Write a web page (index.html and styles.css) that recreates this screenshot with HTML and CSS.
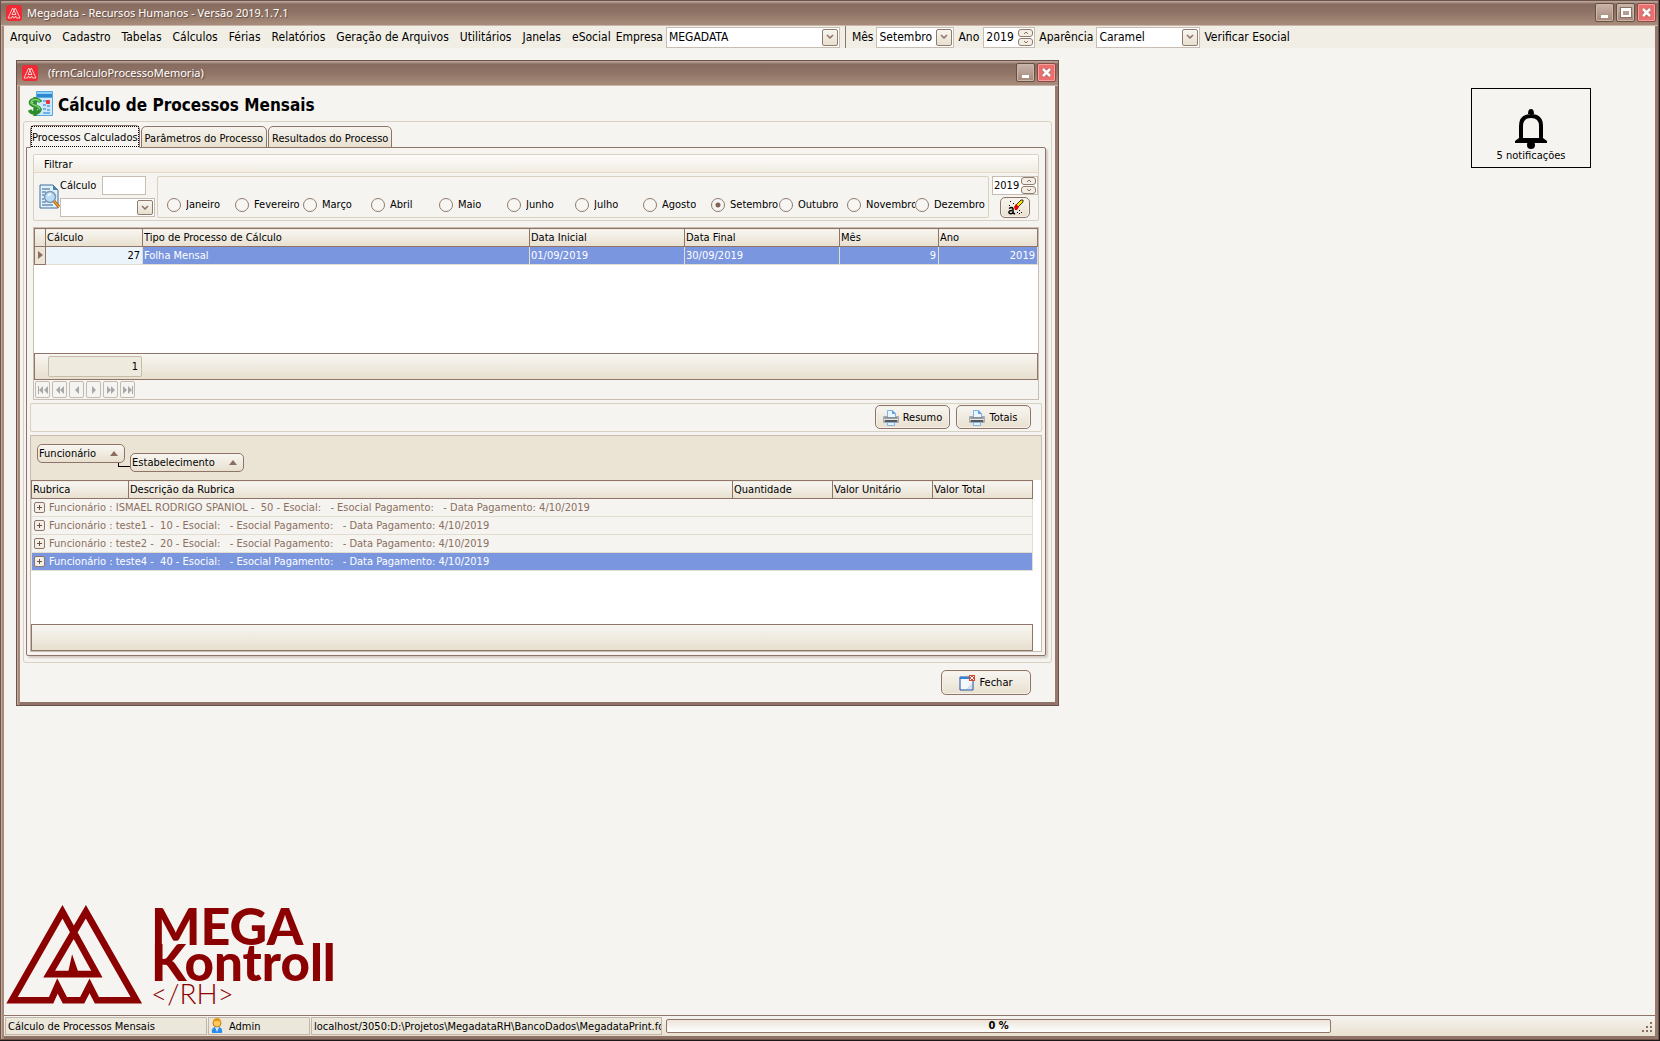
FILE: index.html
```
<!DOCTYPE html>
<html lang="pt-BR">
<head>
    <meta charset="UTF-8">
    <meta name="viewport" content="width=device-width, initial-scale=1.0">
    <title>Megadata - Recursos Humanos</title>
    <link rel="stylesheet" href="styles.css">
</head>
<body>
    <!-- simbolos usados mais de uma vez -->
    <svg class="defs" aria-hidden="true">
        <symbol id="app" viewBox="0 0 16 16">
            <rect width="16" height="16" rx="3" fill="#ee2b35"/>
            <path d="M9.300 3 14 13h-3.500L9.500 11l-1 2h-1l-1-2-1 2H2L6.700 3l3.300 6.500H6z" fill="none" stroke="#ffd9d6" stroke-width=".9"/>
        </symbol>
        <symbol id="down" viewBox="0 0 8 6"><path d="M1 1l3 3 3-3" fill="none" stroke="#8a7060" stroke-width="1.500"/></symbol>
        <symbol id="tri-up" viewBox="0 0 8 5"><path d="M0 5l4-5 4 5z" fill="#8a6e60"/></symbol>
        <symbol id="close" viewBox="0 0 11 11"><path d="M2 2l7 7M9 2l-7 7" stroke="#a5685f" stroke-width="4"/><path d="M2 2l7 7M9 2l-7 7" stroke="#fff" stroke-width="2.500"/></symbol>
        <symbol id="printer" viewBox="0 0 16 17">
            <path d="M0 8q0-1 1-1h14q1 0 1 1v5q0 1-1 1H1q-1 0-1-1z" fill="#a9abad"/>
            <path d="M4.500 1.500h5l3 3v4h-8z" fill="#eaf5ff" stroke="#7cb4e6"/>
            <path d="M9 1v4h4z" fill="#5da4e4"/>
            <path d="M2 8h12v1.500H2z" fill="#8b8e91"/>
            <path d="M1 10h14v1H1z" fill="#e3e4e5"/>
            <path d="M2 11h12v2H2z" fill="#55585b"/>
            <path d="M4.500 13.500h7v3h-7z" fill="#e6f3ff" stroke="#7cb4e6"/>
        </symbol>
    </svg>

    <div class="window main-window">
        <div class="titlebar">
            <svg class="app-icon"><use href="#app"/></svg>
            <span class="title-text">Megadata - Recursos Humanos - Versão 2019.1.7.1</span>
            <button class="win-btn" aria-label="Minimizar"><i class="min"></i></button>
            <button class="win-btn" aria-label="Maximizar"><i class="max"></i></button>
            <button class="win-btn red" aria-label="Fechar"><svg width="11" height="11"><use href="#close"/></svg></button>
        </div>

        <div class="menubar">
            <nav class="menu">
                <a href="#">Arquivo</a>
                <a href="#">Cadastro</a>
                <a href="#">Tabelas</a>
                <a href="#">Cálculos</a>
                <a href="#">Férias</a>
                <a href="#">Relatórios</a>
                <a href="#">Geração de Arquivos</a>
                <a href="#">Utilitários</a>
                <a href="#">Janelas</a>
                <a href="#">eSocial</a>
            </nav>
            <label for="empresa">Empresa</label>
            <span class="combo w-empresa">
                <select id="empresa"><option>MEGADATA</option></select>
                <span class="drop"><svg width="8" height="6"><use href="#down"/></svg></span>
            </span>
            <span class="sep"></span>
            <label for="mes">Mês</label>
            <span class="combo w-mes">
                <select id="mes"><option>Setembro</option></select>
                <span class="drop"><svg width="8" height="6"><use href="#down"/></svg></span>
            </span>
            <label for="ano">Ano</label>
            <span class="spin">
                <input type="text" id="ano" value="2019">
                <span class="spin-btns">
                    <button aria-label="Mais"><svg viewBox="0 0 6 4"><path d="M1 3l2-2 2 2"/></svg></button>
                    <button aria-label="Menos"><svg viewBox="0 0 6 4"><path d="M1 1l2 2 2-2"/></svg></button>
                </span>
            </span>
            <label for="aparencia">Aparência</label>
            <span class="combo w-aparencia">
                <select id="aparencia"><option>Caramel</option></select>
                <span class="drop"><svg width="8" height="6"><use href="#down"/></svg></span>
            </span>
            <a href="#" class="verificar">Verificar Esocial</a>
        </div>

        <div class="workspace">
            <!-- aviso de notificacoes -->
            <button class="notify">
                <svg width="32" height="40" viewBox="0 0 32 40">
                    <path d="M16 0q3 0 3 5h-6q0-5 3-5z"/>
                    <path d="M6 31V17Q6 7 16 7t10 10v14" fill="none" stroke="#000" stroke-width="4"/>
                    <path d="M4 29h24l4 3v2H0v-2z"/>
                    <circle cx="16" cy="36" r="4"/>
                </svg>
                5 notificações
            </button>

            <div class="logo">
                <svg width="137" height="102" viewBox="18 70 410 305">
                    <path d="M187 96 36 361H153L172 318 194 361H246L268 318 290 361H408L257 96 147 283H213L218 260 226 283H290Z" fill="none" stroke="#8b0000" stroke-width="20" stroke-miterlimit="10"/>
                </svg>
                <div class="logo-text">
                    <div class="mega">MEGA</div>
                    <div class="kontroll">Kontroll</div>
                    <div class="rh">&lt;/RH&gt;</div>
                </div>
            </div>

            <!-- janela de calculo -->
            <div class="window child-window">
                <div class="titlebar">
                    <svg class="app-icon"><use href="#app"/></svg>
                    <span class="title-text">(frmCalculoProcessoMemoria)</span>
                    <button class="win-btn" aria-label="Minimizar"><i class="min"></i></button>
                    <button class="win-btn red" aria-label="Fechar"><svg width="11" height="11"><use href="#close"/></svg></button>
                </div>
                <div class="form">
                    <header class="form-header">
                        <svg width="25" height="25" viewBox="0 0 25 25">
                            <rect x="8" y="0" width="17" height="25" rx="1" fill="#55a9e3"/>
                            <rect x="9" y="1" width="15" height="5" fill="#2f86cf"/>
                            <rect x="9" y="1" width="15" height="2" fill="#8fd0f5"/>
                            <rect x="9" y="7" width="15" height="17" fill="#cfe7f9"/>
                            <g fill="#6fb2e4"><rect x="11" y="9" width="3" height="2"/><rect x="15" y="9" width="3" height="2"/><rect x="15" y="13" width="3" height="2"/><rect x="19" y="14" width="3" height="2"/><rect x="15" y="17" width="3" height="2"/><rect x="19" y="18" width="3" height="2"/><rect x="15" y="21" width="7" height="2"/></g>
                            <rect x="18" y="9" width="4" height="4" rx="1" fill="#e8343a"/>
                            <path d="M12.500 11Q11 8.500 7 8.500 2 9 2.500 12 3 14 7 15t5 3.500q-1 3.500-5 3.500T1.500 19M7 6v19" fill="none" stroke="#2c8d2c" stroke-width="3.500"/>
                            <path d="M12 10.500Q10 8.500 7 8.500 3 9 3 12 4 13.500 7.500 14.500T12 18.500" fill="none" stroke="#7fd468" stroke-width="1.500"/>
                        </svg>
                        <h1>Cálculo de Processos Mensais</h1>
                    </header>

                    <div class="group">
                        <div class="tabs">
                            <button class="tab active"><span>Processos Calculados</span></button>
                            <button class="tab"><span>Parâmetros do Processo</span></button>
                            <button class="tab"><span>Resultados do Processo</span></button>
                        </div>
                        <div class="page">
                            <fieldset class="filter">
                                <div class="filter-title">Filtrar</div>
                                <div class="filter-body">
                                    <svg class="search-icon" width="21" height="25" viewBox="0 0 21 25">
                                        <path d="M1 1h13l5 5v18H1z" fill="#e3f1fb" stroke="#3c6f9e"/>
                                        <path d="M14 1v5h5z" fill="#4c81ad"/>
                                        <path d="M3 5h8M3 8h4M3 11h2M3 15h2M3 18h4M3 21h11" stroke="#2d5f92" stroke-width="1"/>
                                        <circle cx="11" cy="13" r="5.500" fill="#b9dcf7" stroke="#7d98b4" stroke-width="1.500"/>
                                        <path d="M9 12q1-2 3-2" stroke="#fff" stroke-width="1.500" fill="none"/>
                                        <path d="M15 17l5 6" stroke="#b86a12" stroke-width="3"/>
                                        <path d="M15 17l5 6" stroke="#ffc04a" stroke-width="1"/>
                                    </svg>
                                    <div class="calc">
                                        <div class="calc-row">
                                            <label for="calculo">Cálculo</label>
                                            <input type="text" id="calculo">
                                        </div>
                                        <span class="combo">
                                            <select aria-label="Tipo de cálculo"><option></option></select>
                                            <span class="drop"><svg width="8" height="6"><use href="#down"/></svg></span>
                                        </span>
                                    </div>
                                    <div class="months">
                                        <label><input type="radio" name="m"><span>Janeiro</span></label>
                                        <label><input type="radio" name="m"><span>Fevereiro</span></label>
                                        <label><input type="radio" name="m"><span>Março</span></label>
                                        <label><input type="radio" name="m"><span>Abril</span></label>
                                        <label><input type="radio" name="m"><span>Maio</span></label>
                                        <label><input type="radio" name="m"><span>Junho</span></label>
                                        <label><input type="radio" name="m"><span>Julho</span></label>
                                        <label><input type="radio" name="m"><span>Agosto</span></label>
                                        <label><input type="radio" name="m" checked><span>Setembro</span></label>
                                        <label><input type="radio" name="m"><span>Outubro</span></label>
                                        <label><input type="radio" name="m"><span>Novembro</span></label>
                                        <label><input type="radio" name="m"><span>Dezembro</span></label>
                                    </div>
                                    <div class="year">
                                        <span class="spin">
                                            <input type="text" value="2019" aria-label="Ano do filtro">
                                            <span class="spin-btns">
                                                <button aria-label="Mais"><svg viewBox="0 0 6 4"><path d="M1 3l2-2 2 2"/></svg></button>
                                                <button aria-label="Menos"><svg viewBox="0 0 6 4"><path d="M1 1l2 2 2-2"/></svg></button>
                                            </span>
                                        </span>
                                        <button class="btn erase" aria-label="Limpar filtro">
                                            <svg width="17" height="16" viewBox="0 0 17 16">
                                                <path d="M9 6l5-5h2v2l-5 5z" fill="#ffe600" stroke="#000" stroke-width=".8"/>
                                                <path d="M7 8l2-3 3 3-2 3H8z" fill="#e00000"/>
                                                <path d="M2 9.500q3-2 4 0V14M5 11.500q-3.500 0-3 2T6 14l2 1" fill="none" stroke="#000" stroke-width="1.500"/>
                                                <path d="M3 2h1v1H3zM6 4h1v1H6zM2 6h1v1H2zM10 13h1v1h-1zM12 11h1v1h-1zM12 14h1v1h-1zM14 13h1v1h-1z"/>
                                            </svg>
                                        </button>
                                    </div>
                                </div>
                            </fieldset>

                            <div class="grid-box">
                                <div class="grid-area area-top">
                                    <table class="grid">
                                        <colgroup><col class="c-ind"><col class="c-calc"><col><col class="c-date"><col class="c-date"><col class="c-num"><col class="c-num"></colgroup>
                                        <thead>
                                            <tr><th></th><th>Cálculo</th><th>Tipo de Processo de Cálculo</th><th>Data Inicial</th><th>Data Final</th><th>Mês</th><th>Ano</th></tr>
                                        </thead>
                                        <tbody>
                                            <tr class="selected">
                                                <td class="ind"><svg width="5" height="8"><path d="M0 0l5 4-5 4z" fill="#8a6e60"/></svg></td>
                                                <td class="num focus">27</td><td>Folha Mensal</td><td>01/09/2019</td><td>30/09/2019</td><td class="num">9</td><td class="num">2019</td>
                                            </tr>
                                        </tbody>
                                    </table>
                                </div>
                                <div class="grid-footer"><span class="count">1</span></div>
                                <div class="navigator">
                                    <button aria-label="Primeiro"><svg width="10" height="8"><path d="M0 0h1v8H0zM5 0v8L1 4zM10 0v8L6 4z"/></svg></button>
                                    <button aria-label="Página anterior"><svg width="8" height="8"><path d="M4 0v8L0 4zM8 0v8L4 4z"/></svg></button>
                                    <button aria-label="Anterior"><svg width="4" height="8"><path d="M4 0v8L0 4z"/></svg></button>
                                    <button aria-label="Próximo"><svg width="4" height="8"><path d="M0 0v8l4-4z"/></svg></button>
                                    <button aria-label="Próxima página"><svg width="8" height="8"><path d="M0 0v8l4-4zM4 0v8l4-4z"/></svg></button>
                                    <button aria-label="Último"><svg width="10" height="8"><path d="M0 0v8l4-4zM5 0v8l4-4zM9 0h1v8H9z"/></svg></button>
                                </div>
                            </div>

                            <div class="actions">
                                <button class="btn"><svg width="16" height="17"><use href="#printer"/></svg>Resumo</button>
                                <button class="btn"><svg width="16" height="17"><use href="#printer"/></svg>Totais</button>
                            </div>

                            <div class="detail-box">
                                <div class="group-by">
                                    <button class="chip">Funcionário<svg width="8" height="5"><use href="#tri-up"/></svg></button>
                                    <span class="link"></span>
                                    <button class="chip second">Estabelecimento<svg width="8" height="5"><use href="#tri-up"/></svg></button>
                                </div>
                                <div class="grid-area area-detail">
                                    <table class="grid detail">
                                        <colgroup><col class="c-calc"><col><col class="c-num"><col class="c-num"><col class="c-num"></colgroup>
                                        <thead>
                                            <tr><th>Rubrica</th><th>Descrição da Rubrica</th><th>Quantidade</th><th>Valor Unitário</th><th>Valor Total</th></tr>
                                        </thead>
                                        <tbody>
                                            <tr><td colspan="5"><button class="plus" aria-label="Expandir"></button>Funcionário : ISMAEL RODRIGO SPANIOL -  50 - Esocial:   - Esocial Pagamento:   - Data Pagamento: 4/10/2019</td></tr>
                                            <tr><td colspan="5"><button class="plus" aria-label="Expandir"></button>Funcionário : teste1 -  10 - Esocial:   - Esocial Pagamento:   - Data Pagamento: 4/10/2019</td></tr>
                                            <tr><td colspan="5"><button class="plus" aria-label="Expandir"></button>Funcionário : teste2 -  20 - Esocial:   - Esocial Pagamento:   - Data Pagamento: 4/10/2019</td></tr>
                                            <tr class="selected"><td colspan="5"><button class="plus" aria-label="Expandir"></button>Funcionário : teste4 -  40 - Esocial:   - Esocial Pagamento:   - Data Pagamento: 4/10/2019</td></tr>
                                        </tbody>
                                    </table>
                                </div>
                                <div class="grid-footer"></div>
                            </div>
                        </div>
                    </div>

                    <footer class="form-footer">
                        <button class="btn close-btn">
                            <svg width="16" height="16" viewBox="0 0 16 16">
                                <path d="M1 2h13v13H1z" fill="#f4f8fd" stroke="#1b4e9b"/>
                                <path d="M1 2h13v2H1z" fill="#2f86d8"/>
                                <path d="M13 8v6H7z" fill="#d5e0ee"/>
                                <rect x="10" y="0" width="6" height="6" fill="#d8442c"/>
                                <path d="M11 1l4 4M15 1l-4 4" stroke="#fff"/>
                            </svg>Fechar
                        </button>
                    </footer>
                </div>
            </div>
        </div>

        <div class="statusbar">
            <div class="panel p-form">Cálculo de Processos Mensais</div>
            <div class="panel p-user">
                <svg width="12" height="16" viewBox="0 0 12 16">
                    <path d="M1 15q-1-5 3-6h4q4 1 3 6z" fill="#2b8df0"/>
                    <path d="M4 9h4l-2 5z" fill="#d9efff"/>
                    <circle cx="6" cy="5" r="4" fill="#ffc95c" stroke="#c47a10"/>
                    <path d="M2 4q0-4 4-4t4 4q-4-2-8 0z" fill="#e59a1c"/>
                </svg>Admin
            </div>
            <div class="panel p-db">localhost/3050:D:\Projetos\MegadataRH\BancoDados\MegadataPrint.fdb</div>
            <div class="progress" role="progressbar" aria-valuenow="0">0 %</div>
            <svg class="grip" width="11" height="11"><path d="M9 0h2v2H9zM9 4h2v2H9zM9 8h2v2H9zM5 4h2v2H5zM5 8h2v2H5zM1 8h2v2H1z"/></svg>
        </div>
    </div>
</body>
</html>
```
FILE: styles.css
```
* {
    box-sizing: border-box;
}
body {
    margin: 0;
    background: #1b1719;
    font-family: Tahoma, "DejaVu Sans Condensed", sans-serif;
    font-size: 11px;
    color: #000;
}
button, input, select {
    font: inherit;
    color: inherit;
    margin: 0;
    padding: 0;
}
a {
    color: inherit;
    text-decoration: none;
}
svg {
    flex: none;
}
.defs {
    display: none;
}

/* molduras das janelas */
.window {
    display: flex;
    flex-direction: column;
    background: #f6f4f0;
    border: 1px solid #6b5349;
    box-shadow: inset 1px 0 #c4aca1, inset 3px 0 #a58979, inset -3px 0 #96796b, inset 0 -3px #8f7366;
    padding: 0 3px 3px;
}
.main-window {
    height: calc(100vh - 1px);
    margin-right: 1px;
}
.titlebar {
    display: flex;
    align-items: center;
    gap: 2px;
    height: 25px;
    flex: none;
    margin: 0 -3px;
    padding: 0 2px 2px 5px;
    background: linear-gradient(#b8a095 0, #b8a095 1px, #866b5f 3px, #8c7164 10px, #a88c7b 24px, #c9b5aa 24px);
}
.app-icon {
    width: 16px;
    height: 16px;
}
.title-text {
    flex: 1;
    margin-left: 3px;
    font-family: "Segoe UI", "Noto Sans", sans-serif;
    font-size: 11px;
    color: #fff;
    text-shadow: 1px 1px 1px #5d453b;
}
.win-btn {
    display: flex;
    align-items: center;
    justify-content: center;
    width: 19px;
    height: 19px;
    border: 1px solid #66503f;
    border-radius: 2px;
    background: linear-gradient(#c9b3a9, #a5897b);
    box-shadow: inset 0 0 0 1px #cbb6ac;
}
.win-btn.red {
    background: #ec6f70;
    box-shadow: inset 0 0 0 1px #f5a09d;
    border-color: #8b4a44;
}
.min {
    width: 7px;
    height: 3px;
    margin-top: 8px;
    background: #fff;
}
.max {
    width: 10px;
    height: 9px;
    border: 2px solid #fff;
    border-top-width: 3px;
    outline: 1px solid #8a7062;
}

/* menu */
.menubar {
    display: flex;
    align-items: center;
    height: 22px;
    flex: none;
    padding-left: 6px;
    background: #f1eee5;
    font-size: 12px;
    white-space: nowrap;
}
.menu {
    display: flex;
    gap: 11px;
    margin-right: 5px;
}
.sep {
    width: 1px;
    height: 22px;
    margin: 0 6px 0 1px;
    background: #8f7567;
}
.combo {
    position: relative;
    display: flex;
    height: 21px;
    margin: 0 4px 0 3px;
}
.combo select {
    width: 100%;
    padding: 0 18px 0 2px;
    appearance: none;
    border: 1px solid #c8bdb3;
    border-radius: 0;
    background: #fff;
}
.w-empresa {
    width: 174px;
}
.w-mes {
    width: 78px;
}
.w-aparencia {
    width: 104px;
}
.drop {
    position: absolute;
    top: 2px;
    right: 2px;
    bottom: 2px;
    width: 16px;
    display: flex;
    align-items: center;
    justify-content: center;
    border: 1px solid #8f7c6d;
    border-radius: 2px;
    background: linear-gradient(#f7f5f0, #e8e0cf);
    pointer-events: none;
}
.spin {
    display: flex;
    align-items: center;
    width: 52px;
    height: 21px;
    margin: 0 4px;
    padding: 0 1px 0 2px;
    border: 1px solid #c8bdb3;
    background: #fff;
}
.spin input {
    flex: 1;
    min-width: 0;
    border: 0;
    background: none;
}
.spin-btns {
    display: flex;
    flex-direction: column;
    gap: 1px;
}
.spin-btns button {
    display: flex;
    align-items: center;
    justify-content: center;
    width: 15px;
    height: 8px;
    border: 1px solid #8f7c6d;
    border-radius: 3px;
    background: #f3efe6;
}
.spin-btns svg {
    width: 6px;
    height: 4px;
    fill: none;
    stroke: #8a6e60;
}

/* area de trabalho */
.workspace {
    position: relative;
    flex: 1;
    min-height: 0;
}
.notify {
    position: absolute;
    top: 40px;
    right: 64px;
    width: 120px;
    height: 80px;
    display: flex;
    flex-direction: column;
    align-items: center;
    justify-content: flex-end;
    padding-bottom: 5px;
    border: 1px solid #000;
    background: none;
}
.logo {
    position: absolute;
    left: 2px;
    bottom: 10px;
    display: flex;
    align-items: flex-end;
    gap: 8px;
    color: #8b0000;
    font-family: Lato, sans-serif;
}
.logo-text {
    display: flex;
    flex-direction: column;
}
.mega {
    font-size: 52px;
    font-weight: 900;
    line-height: 36px;
}
.kontroll {
    font-size: 51px;
    font-weight: 900;
    line-height: 38px;
}
.rh {
    font-size: 28px;
    font-weight: 300;
    line-height: 24px;
}

/* janela filha */
.child-window {
    position: absolute;
    top: 12px;
    left: 12px;
    right: 596px;
}
.child-window .title-text {
    margin-left: 8px;
}
.form-header {
    display: flex;
    align-items: center;
    gap: 5px;
    height: 35px;
    padding-left: 8px;
}
h1 {
    margin: 0;
    padding-top: 3px;
    font-size: 17px;
    font-weight: bold;
}
.group {
    margin: 0 3px;
    padding: 3px 5px 6px 2px;
    border: 1px solid #d8d0c0;
    border-radius: 3px;
}
.tabs {
    position: relative;
    display: flex;
    align-items: flex-end;
    gap: 1px;
    margin: 0 0 -1px 4px;
}
.tab {
    height: 22px;
    padding: 2px 3px 0;
    border: 1px solid #8f7567;
    border-radius: 5px 5px 0 0;
    background: linear-gradient(#f6f4ef, #e9e1cf);
}
.tab.active {
    height: 23px;
    padding: 0 1px;
    border-bottom-color: #f6f4f0;
    background: #f6f4f0;
}
.tab.active span {
    display: block;
    padding: 4px 0 2px;
    outline: 1px dotted #000;
}
.page {
    display: flex;
    flex-direction: column;
    gap: 3px;
    padding: 6px 3px 3px;
    border: 1px solid #8f7567;
    border-radius: 0 2px 2px 2px;
    box-shadow: 2px 2px 2px #d3c9bf;
}
.filter {
    min-width: 0;
    margin: 0 3px;
    padding: 0;
    border: 1px solid #d8d0c0;
    border-radius: 2px;
}
.filter-title {
    height: 18px;
    padding: 3px 10px 0;
    border-bottom: 1px solid #e3dac6;
    background: linear-gradient(#fdfcfa, #f0ece3);
}
.filter-body {
    display: flex;
    align-items: center;
    padding: 2px 0;
    height: 47px;
}
.search-icon {
    margin-left: 5px;
}
.calc {
    display: flex;
    flex-direction: column;
    gap: 3px;
    width: 95px;
}
.calc-row {
    display: flex;
    justify-content: space-between;
    align-items: center;
    padding-right: 9px;
}
.calc-row input {
    width: 44px;
    height: 19px;
    border: 1px solid #c8bdb3;
    background: #fff;
}
.calc .combo {
    height: 19px;
    margin: 0;
}
.months {
    display: grid;
    grid-template-columns: repeat(12, minmax(0, 1fr));
    align-items: end;
    flex: 1;
    min-width: 0;
    height: 42px;
    margin: 0 3px 0 2px;
    padding: 0 5px 5px 9px;
    border: 1px solid #d8d0c0;
    border-radius: 2px;
}
.months label {
    display: flex;
    align-items: center;
    gap: 5px;
    white-space: nowrap;
}
.months label:not(:last-child) span {
    overflow: hidden;
}
input[type="radio"] {
    flex: none;
    width: 14px;
    height: 14px;
    appearance: none;
    border: 1px solid #8f7c6d;
    border-radius: 50%;
    background: #f8f6f2;
}
input[type="radio"]:checked {
    background: radial-gradient(#7d6456 2px, #f8f6f2 3px);
}
.year {
    display: flex;
    flex-direction: column;
    align-items: center;
    gap: 2px;
}
.year .spin {
    width: 46px;
    height: 19px;
    margin: 0;
    padding-left: 1px;
}
.btn {
    display: flex;
    align-items: center;
    justify-content: center;
    gap: 4px;
    width: 75px;
    height: 24px;
    border: 1px solid #8f7567;
    border-radius: 5px;
    background: linear-gradient(#f8f6f2, #e8e0cf);
    box-shadow: inset 0 0 0 1px #f5f1e8;
}
.erase {
    width: 30px;
    height: 21px;
}

/* tabelas */
.grid-box {
    margin: 3px 3px 0;
    border: 1px solid #c8bdb3;
}
.grid-area {
    background: #fff;
}
.area-top {
    min-height: 125px;
}
.area-detail {
    min-height: 144px;
    padding-right: 8px;
}
.grid {
    width: 100%;
    table-layout: fixed;
    border-collapse: collapse;
    white-space: nowrap;
}
.c-ind {
    width: 11px;
}
.c-calc {
    width: 97px;
}
.c-date {
    width: 155px;
}
.c-num {
    width: 100px;
}
.area-top .c-num {
    width: 99px;
}
th {
    height: 18px;
    padding: 0 1px;
    border: 1px solid #8f7567;
    background: linear-gradient(#f8f6f2, #e8e0cf);
    font-weight: normal;
    text-align: left;
}
td {
    height: 18px;
    padding: 0 1px;
    border: 1px solid #e3ddd0;
}
.num {
    padding-right: 2px;
    text-align: right;
}
.selected td {
    background: #7a96df;
    color: #fff;
}
.selected .focus {
    background: #ebf4fb;
    color: #000;
}
.selected .ind {
    padding: 0 3px;
    border-color: #8f7567;
    background: #ece5d6;
}
.grid-footer {
    display: flex;
    align-items: center;
    height: 27px;
    border: 1px solid #8f7567;
    background: linear-gradient(#f8f6f2, #e8e0cf);
}
.count {
    width: 94px;
    margin-left: 13px;
    padding: 3px;
    border: 1px solid #c8bba8;
    border-radius: 2px;
    background: #efeade;
    text-align: right;
}
.navigator {
    display: flex;
    gap: 2px;
    padding: 1px;
}
.navigator button {
    display: flex;
    align-items: center;
    justify-content: center;
    width: 15px;
    height: 17px;
    border: 1px solid #c3bab0;
    border-radius: 2px;
    background: #f6f4f0;
}
.navigator path {
    fill: #a8a8a8;
}
.actions {
    display: flex;
    justify-content: flex-end;
    gap: 6px;
    padding: 1px 10px 2px;
    border: 1px solid #d8d0c0;
    border-radius: 2px;
}
.detail-box {
    border: 1px solid #c8bdb3;
    background: #fff;
}
.group-by {
    display: flex;
    height: 44px;
    padding: 8px 6px;
    background: #ebe4d5;
}
.chip {
    display: flex;
    align-items: center;
    justify-content: space-between;
    gap: 14px;
    height: 19px;
    padding: 0 6px 0 1px;
    border: 1px solid #8f7567;
    border-radius: 5px;
    background: linear-gradient(#f8f6f2, #e8e0cf);
}
.chip.second {
    margin-top: 9px;
}
.link {
    width: 12px;
    height: 4px;
    margin: 19px 0 0 -7px;
    border: solid #000;
    border-width: 0 0 1px 1px;
}
.detail td {
    padding-left: 2px;
    background: #f6f4f0;
    color: #8a6f60;
    white-space: pre;
}
.detail .selected td {
    background: #7a96df;
    color: #fff;
}
.plus {
    width: 11px;
    height: 11px;
    margin-right: 4px;
    vertical-align: -1px;
    border: 1px solid #8f7567;
    border-radius: 2px;
    background:
        linear-gradient(#6b5349, #6b5349) center / 5px 1px no-repeat,
        linear-gradient(#6b5349, #6b5349) center / 1px 5px no-repeat,
        #f3efe6;
}
.detail-box .grid-footer {
    margin-right: 8px;
}
.form-footer {
    display: flex;
    justify-content: flex-end;
    padding: 7px 24px 7px;
}
.close-btn {
    width: 90px;
    height: 25px;
}

/* barra de status */
.statusbar {
    display: flex;
    align-items: center;
    gap: 1px;
    height: 21px;
    flex: none;
    padding: 0 2px 0 1px;
    border-top: 1px solid #8f7567;
    background: linear-gradient(#f6f4f0, #e8e0cf);
}
.panel {
    display: flex;
    align-items: center;
    gap: 6px;
    height: 18px;
    padding: 0 2px;
    border: 1px solid #c3b5a8;
    background: #ece7db;
    white-space: nowrap;
    overflow: hidden;
}
.p-form {
    width: 202px;
}
.p-user {
    width: 102px;
}
.p-db {
    width: 351px;
}
.progress {
    flex: 0 1 665px;
    height: 14px;
    margin-left: 3px;
    border: 1px solid #8f7567;
    border-radius: 2px;
    background: linear-gradient(#ebe4d9, #fff);
    line-height: 12px;
    text-align: center;
    font-weight: bold;
}
.grip {
    align-self: flex-end;
    margin: 0 1px 3px auto;
    fill: #8a6e60;
}
```
